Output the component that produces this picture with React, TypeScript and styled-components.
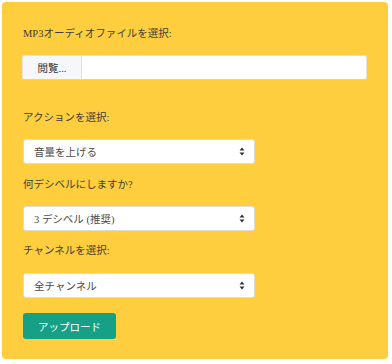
import React from "react";
import styled, { createGlobalStyle } from "styled-components";

const Global = createGlobalStyle`
  html, body { margin: 0; padding: 0; background: #ffffff; }
  body {
    padding: 2px;
    font-family: "Liberation Serif", "Noto Sans CJK JP", serif;
    font-size: 10.5px;
    color: #3a3a3a;
  }
`;

const Panel = styled.form`
  box-sizing: border-box;
  width: 386px;
  height: 357px;
  background: #ffce3e;
  border-radius: 4px;
  padding: 24px 21px 20px 21px;
  display: flex;
  flex-direction: column;
  align-items: flex-start;
`;

const Group = styled.div<{ $mb: number }>`
  display: flex;
  flex-direction: column;
  align-items: stretch;
  align-self: stretch;
  margin-bottom: ${(p) => p.$mb}px;
`;

const Label = styled.label<{ $mb?: number }>`
  display: block;
  height: 16px;
  line-height: 16px;
  margin-bottom: ${(p) => p.$mb ?? 13}px;
  color: #3d3d3d;
  white-space: nowrap;
`;

const FileBox = styled.div`
  box-sizing: border-box;
  display: flex;
  height: 25px;
  width: 345px;
  margin-left: -1px;
  background: #fff;
  border: 1px solid #e2e2e2;
  border-bottom-color: #d2d2d2;
  border-radius: 3px;
  overflow: hidden;
`;

const Browse = styled.span`
  box-sizing: border-box;
  width: 59px;
  display: flex;
  align-items: center;
  justify-content: center;
  background: #f5f7fa;
  border-right: 1px solid #e0e0e0;
  color: #333;
`;

const SelectBox = styled.div`
  box-sizing: border-box;
  width: 232px;
  height: 25px;
  display: flex;
  align-items: center;
  justify-content: space-between;
  padding: 0 9px 0 10px;
  background: #fff;
  border: 1px solid #dcdcdc;
  border-radius: 3px;
  color: #4a4a4a;
`;

const Arrows = styled.svg`
  width: 6px;
  height: 9px;
  flex: none;
`;

const Button = styled.button`
  box-sizing: border-box;
  width: 93px;
  height: 26px;
  border: none;
  border-radius: 3px;
  background: #16a085;
  color: #fff;
  font-family: "Liberation Serif", "Noto Sans CJK JP", serif;
  font-size: 10.5px;
  padding: 0;
  cursor: pointer;
`;

const Select: React.FC<{ value: string }> = ({ value }) => (
  <SelectBox>
    <span>{value}</span>
    <Arrows viewBox="0 0 6 9">
      <path d="M3 0.5 L5.5 3.5 L0.5 3.5 Z" fill="#333" />
      <path d="M3 8.5 L5.5 5.5 L0.5 5.5 Z" fill="#333" />
    </Arrows>
  </SelectBox>
);

export default function App() {
  return (
    <>
      <Global />
      <Panel onSubmit={(e) => e.preventDefault()}>
        <Group $mb={30}>
          <Label>MP3オーディオファイルを選択:</Label>
          <FileBox>
            <Browse>閲覧...</Browse>
          </FileBox>
        </Group>
        <Group $mb={13}>
          <Label>アクションを選択:</Label>
          <Select value="音量を上げる" />
        </Group>
        <Group $mb={12}>
          <Label>何デシベルにしますか?</Label>
          <Select value="3 デシベル (推奨)" />
        </Group>
        <Group $mb={15}>
          <Label $mb={14}>チャンネルを選択:</Label>
          <Select value="全チャンネル" />
        </Group>
        <Button type="submit">アップロード</Button>
      </Panel>
    </>
  );
}
